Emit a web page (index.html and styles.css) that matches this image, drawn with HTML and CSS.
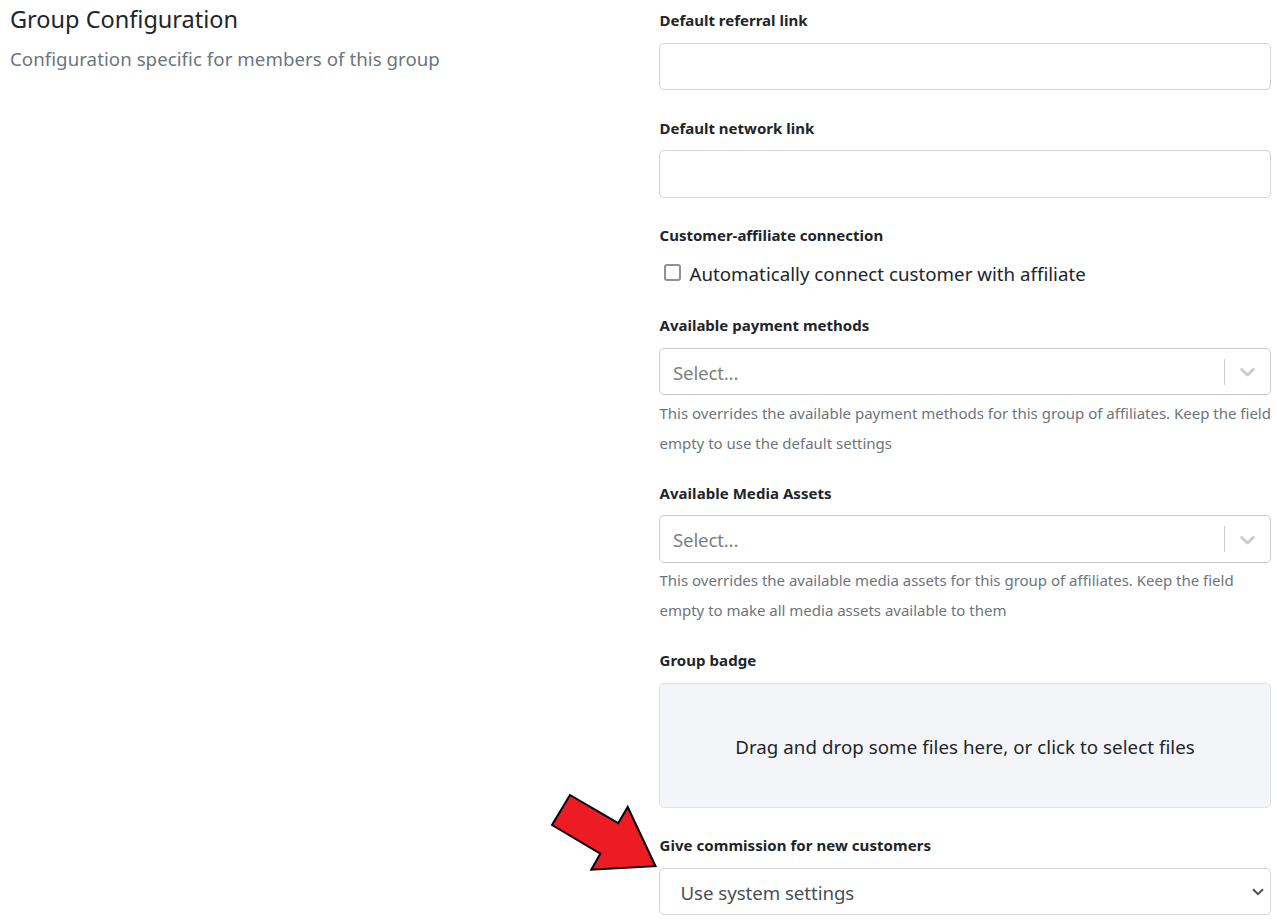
FILE: index.html
```html
<!DOCTYPE html>
<html lang="en">
<head>
<meta charset="utf-8">
<title>Group Configuration</title>
<link rel="stylesheet" href="styles.css">
</head>
<body>
<main class="page">
  <section class="intro">
    <h1 class="title"><span>Group Configuration</span></h1>
    <p class="subtitle"><span>Configuration specific for members of this group</span></p>
  </section>
  <form class="form">
    <div class="field">
      <label class="label" for="referral"><span>Default referral link</span></label>
      <input class="input" id="referral" type="text">
    </div>
    <div class="field">
      <label class="label" for="network"><span>Default network link</span></label>
      <input class="input" id="network" type="text">
    </div>
    <div class="field">
      <div class="label"><span>Customer-affiliate connection</span></div>
      <label class="check"><input class="checkbox" type="checkbox"><span>Automatically connect customer with affiliate</span></label>
    </div>
    <div class="field field-help">
      <div class="label"><span>Available payment methods</span></div>
      <div class="picker">
        <span class="placeholder">Select...</span>
        <span class="divider"></span>
        <svg class="caret" viewBox="0 0 20 20"><path d="M4.516 7.548c0.436-0.446 1.043-0.481 1.576 0l3.908 3.747 3.908-3.747c0.533-0.481 1.141-0.446 1.574 0 0.436 0.445 0.408 1.197 0 1.615-0.406 0.418-4.695 4.502-4.695 4.502-0.217 0.223-0.502 0.335-0.787 0.335s-0.57-0.112-0.789-0.335c0 0-4.287-4.084-4.695-4.502s-0.436-1.17 0-1.615z"/></svg>
      </div>
      <p class="help"><span>This overrides the available payment methods for this group of affiliates. Keep the field</span><br><span>empty to use the default settings</span></p>
    </div>
    <div class="field field-help">
      <div class="label label-wide"><span>Available Media Assets</span></div>
      <div class="picker">
        <span class="placeholder">Select...</span>
        <span class="divider"></span>
        <svg class="caret" viewBox="0 0 20 20"><path d="M4.516 7.548c0.436-0.446 1.043-0.481 1.576 0l3.908 3.747 3.908-3.747c0.533-0.481 1.141-0.446 1.574 0 0.436 0.445 0.408 1.197 0 1.615-0.406 0.418-4.695 4.502-4.695 4.502-0.217 0.223-0.502 0.335-0.787 0.335s-0.57-0.112-0.789-0.335c0 0-4.287-4.084-4.695-4.502s-0.436-1.17 0-1.615z"/></svg>
      </div>
      <p class="help"><span>This overrides the available media assets for this group of affiliates. Keep the field</span><br><span>empty to make all media assets available to them</span></p>
    </div>
    <div class="field">
      <div class="label label-wide"><span>Group badge</span></div>
      <div class="dropzone"><span>Drag and drop some files here, or click to select files</span></div>
    </div>
    <div class="field">
      <div class="label label-wide"><span>Give commission for new customers</span></div>
      <div class="select">
        <span class="value">Use system settings</span>
        <svg class="chevron" viewBox="0 0 12 8"><path d="M1 1.2 6 6.2 11 1.2"/></svg>
      </div>
    </div>
  </form>
  <svg class="pointer" viewBox="0 0 110 80"><path d="M20 2 68.2 30.2 77.7 14 105.500 73.200 41.300 76.700 50.300 60.700 2 32Z"/></svg>
</main>
</body>
</html>
```
FILE: styles.css
```css
* { box-sizing: border-box; }
body {
  margin: 0;
  background: #fff;
  color: #212529;
  font-family: "Noto Sans", "Open Sans", sans-serif;
  font-size: 18.7px;
  line-height: 30px;
}
.page {
  position: relative;
  display: grid;
  grid-template-columns: 649px 612px;
  height: 921px;
  padding-left: 10px;
  overflow: hidden;
}
.title {
  margin: 0;
  padding-top: 4px;
  font-size: 23.5px;
  font-weight: 400;
}
.subtitle {
  margin: 10px 0 0;
  color: #6c757d;
  letter-spacing: 0.04px;
}
.form { padding-top: 5.25px; }
.field { margin-bottom: 22.5px; }
.label {
  display: block;
  height: 30px;
  margin-bottom: 7.5px;
  padding-left: 0.5px;
  font-size: 15px;
  font-weight: 700;
}
.label-wide { letter-spacing: 0.05px; }
.input {
  display: block;
  width: 100%;
  height: 47.5px;
  border: 1px solid #ced4da;
  border-radius: 5px;
  background: #fff;
}
.check {
  display: flex;
  align-items: center;
  height: 30px;
  padding: 2px 0 0 5px;
  letter-spacing: 0.02px;
}
.checkbox {
  appearance: none;
  width: 17px;
  height: 17px;
  margin: 0 8.500px 3px 0;
  border: 2px solid #8f8f9d;
  border-radius: 3px;
}
.picker {
  display: flex;
  align-items: center;
  height: 47.5px;
  padding: 0 10px 0 13px;
  border: 1px solid #ccc;
  border-radius: 5px;
}
.placeholder {
  flex: 1;
  padding-top: 2px;
  color: #808080;
  letter-spacing: -0.18px;
}
.divider {
  width: 1px;
  height: 26px;
  background: #ccc;
}
.caret {
  width: 25px;
  height: 25px;
  margin-left: 10px;
  fill: #ccc;
}
.help {
  margin: 2.5px 0 0;
  padding-left: 0.5px;
  color: #6c757d;
  font-size: 15px;
  letter-spacing: -0.005px;
  white-space: nowrap;
}
.field-help { margin-bottom: 20px; }
.dropzone {
  display: flex;
  align-items: center;
  justify-content: center;
  height: 125px;
  padding-top: 3px;
  border: 1px solid #dee2e6;
  border-radius: 5px;
  background: #f4f5f8;
  letter-spacing: 0.06px;
}
.select {
  display: flex;
  align-items: center;
  justify-content: space-between;
  height: 47.5px;
  padding: 2px 6px 0 20.5px;
  border: 1px solid #ced4da;
  border-radius: 5px;
  color: #495057;
  letter-spacing: -0.06px;
}
.chevron {
  width: 12px;
  height: 8px;
  margin-bottom: 1px;
  fill: none;
  stroke: #495057;
  stroke-width: 2;
}
.pointer {
  position: absolute;
  top: 793px;
  left: 550px;
  width: 110px;
  height: 80px;
  fill: #ed1c24;
  stroke: #000;
  stroke-width: 2;
}
```
